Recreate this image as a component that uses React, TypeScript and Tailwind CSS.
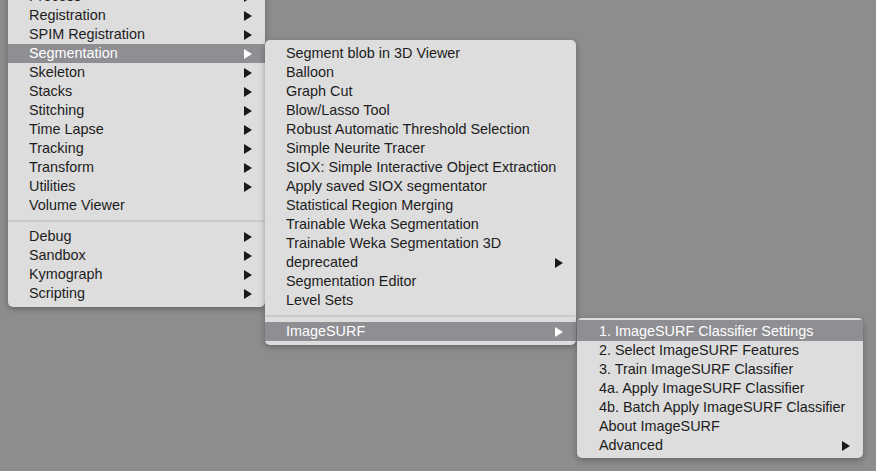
import React from 'react';

type Item = { label: string; sub?: boolean; active?: boolean } | 'sep';

const mainItems: Item[] = [
  { label: 'Process', sub: true },
  { label: 'Registration', sub: true },
  { label: 'SPIM Registration', sub: true },
  { label: 'Segmentation', sub: true, active: true },
  { label: 'Skeleton', sub: true },
  { label: 'Stacks', sub: true },
  { label: 'Stitching', sub: true },
  { label: 'Time Lapse', sub: true },
  { label: 'Tracking', sub: true },
  { label: 'Transform', sub: true },
  { label: 'Utilities', sub: true },
  { label: 'Volume Viewer' },
  'sep',
  { label: 'Debug', sub: true },
  { label: 'Sandbox', sub: true },
  { label: 'Kymograph', sub: true },
  { label: 'Scripting', sub: true },
];

const segItems: Item[] = [
  { label: 'Segment blob in 3D Viewer' },
  { label: 'Balloon' },
  { label: 'Graph Cut' },
  { label: 'Blow/Lasso Tool' },
  { label: 'Robust Automatic Threshold Selection' },
  { label: 'Simple Neurite Tracer' },
  { label: 'SIOX: Simple Interactive Object Extraction' },
  { label: 'Apply saved SIOX segmentator' },
  { label: 'Statistical Region Merging' },
  { label: 'Trainable Weka Segmentation' },
  { label: 'Trainable Weka Segmentation 3D' },
  { label: 'deprecated', sub: true },
  { label: 'Segmentation Editor' },
  { label: 'Level Sets' },
  'sep',
  { label: 'ImageSURF', sub: true, active: true },
];

const surfItems: Item[] = [
  { label: '2. Select ImageSURF Features' },
  { label: '3. Train ImageSURF Classifier' },
  { label: '4a. Apply ImageSURF Classifier' },
  { label: '4b. Batch Apply ImageSURF Classifier' },
  { label: 'About ImageSURF' },
  { label: 'Advanced', sub: true },
];

function Arrow({ white }: { white?: boolean }) {
  return (
    <svg width="8" height="10" viewBox="0 0 8 10" className="shrink-0">
      <polygon points="0,0 8,5 0,10" fill={white ? '#ffffff' : '#1a1a1a'} />
    </svg>
  );
}

function Menu({ items, pl, sepH }: { items: Item[]; pl: string; sepH: string }) {
  return (
    <div className="flex flex-col">
      {items.map((it, i) =>
        it === 'sep' ? (
          <div key={i} className={`${sepH} flex items-center`}>
            <div className="h-[2px] w-full bg-[#cacaca]" />
          </div>
        ) : (
          <div
            key={i}
            className={`flex h-[19px] items-center justify-between ${pl} pr-[13px] ${
              it.active ? 'bg-[#8e8e93] text-white' : 'text-[#1c1c1c]'
            }`}
          >
            <span className="leading-[19px]">{it.label}</span>
            {it.sub && <Arrow white={it.active} />}
          </div>
        )
      )}
    </div>
  );
}

export default function App() {
  return (
    <div
      className="relative h-[471px] w-[876px] overflow-hidden bg-[#8d8d8d] text-[14.4px]"
      style={{ fontFamily: '"Liberation Sans", Arial, sans-serif' }}
    >
      {/* main plugins menu, scrolled so its first row is cut at the top */}
      <div className="absolute left-[8px] top-[-17px] w-[257px] rounded-[5px] bg-[#dddddd] pt-[4px] pb-[4px] shadow-[0_2px_6px_rgba(0,0,0,0.3)]">
        <Menu items={mainItems} pl="pl-[21px]" sepH="h-[12px]" />
      </div>
      <div className="absolute left-[265px] top-[40px] w-[311px] rounded-[5px] bg-[#dddddd] pt-[4px] pb-[4px] shadow-[0_2px_6px_rgba(0,0,0,0.3)]">
        <Menu items={segItems} pl="pl-[21px]" sepH="h-[12px]" />
      </div>
      <div className="absolute left-[577px] top-[318px] w-[286px] rounded-[5px] bg-[#dddddd] pt-[2px] pb-[3px] shadow-[0_2px_6px_rgba(0,0,0,0.3)]">
        <div className="flex h-[21px] items-end justify-between bg-[#8e8e93] pl-[22px] pr-[13px] text-white">
          <span className="leading-[19px]">1. ImageSURF Classifier Settings</span>
        </div>
        <Menu items={surfItems} pl="pl-[22px]" sepH="h-[12px]" />
      </div>
    </div>
  );
}
